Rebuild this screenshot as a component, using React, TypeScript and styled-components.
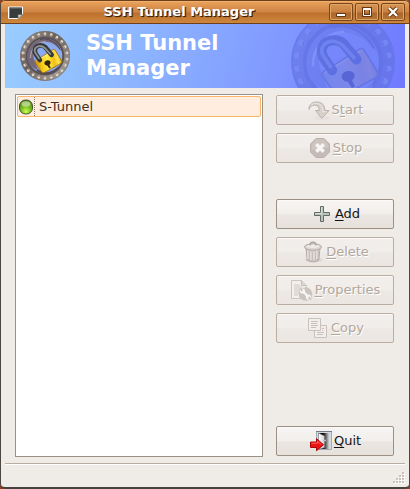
import React from 'react';
import styled, { createGlobalStyle, css } from 'styled-components';

const Global = createGlobalStyle`
  *, *::before, *::after { box-sizing: border-box; }
  html { background: #963e1c; }
  body { margin: 0; font-family: "DejaVu Sans", Verdana, sans-serif; font-size: 13px; color: #1c1a18; }
`;

const Window = styled.div`
  display: flex;
  flex-direction: column;
  min-height: 100vh;
  background: #efebe7;
  border: 1px solid #4a4641;
  border-top: 0;
  border-bottom: 2px solid #45423e;
  border-radius: 5px;
  overflow: hidden;
`;

const TitleBar = styled.header`
  display: flex;
  align-items: center;
  height: 24px;
  margin: 0 -1px;
  padding: 0 4px 0 7px;
  border: 1px solid #6f3f1a;
  border-radius: 5px 5px 0 0;
  background: linear-gradient(#eba45c 0, #dd9450 5px, #cf8544 11px, #bb702c 12px, #c67c35 17px, #cd863e 22px);
  box-shadow: inset 0 1px #f0b16f;
`;

const Title = styled.h1`
  flex: 1;
  margin: 0;
  padding-left: 6px;
  text-align: center;
  font-size: 13px;
  line-height: 22px;
  color: #fff;
  text-shadow: 1px 1px 1px #38200c, 1px 1px #593718;
`;

const WindowButtons = styled.div`
  display: flex;
  gap: 2px;
`;

const WindowButton = styled.button`
  display: grid;
  place-items: center;
  width: 24px;
  height: 18px;
  padding: 0;
  border: 1px solid #78451c;
  border-radius: 2px;
  background: linear-gradient(#d89552 0, #c98141 8px, #aa662d 9px, #b9752f 100%);
  box-shadow: inset 0 0 0 1px #dda566;
`;

const Banner = styled.section`
  position: relative;
  display: flex;
  align-items: center;
  gap: 16px;
  height: 64px;
  margin: 0 4px;
  padding-left: 15px;
  overflow: hidden;
  background: linear-gradient(105deg, #9acdff 0%, #8cb4ff 35%, #8098ff 68%, #7079ff 100%);
`;

const Watermark = styled.div`
  position: absolute;
  right: 10px;
  top: -14px;
  opacity: 0.8;
`;

const BannerTitle = styled.h2`
  position: relative;
  width: 180px;
  margin: 0;
  font-size: 21px;
  line-height: 25px;
  color: #fff;
`;

const Main = styled.main`
  flex: 1;
  display: grid;
  grid-template-columns: 1fr 118px;
  gap: 13px;
  padding: 6px 15px 6px 14px;
`;

const TunnelList = styled.ul`
  margin: 0;
  padding: 1px;
  list-style: none;
  background: #fff;
  border: 1px solid #9c8f83;
`;

const TunnelRow = styled.button`
  display: flex;
  align-items: center;
  width: 100%;
  height: 21px;
  padding: 0;
  border: 1px solid #fbb468;
  border-radius: 2px;
  background: #ffeee0;
  font: inherit;
  line-height: 16px;
  color: #3f3022;
`;

const StatusCell = styled.span`
  display: flex;
  height: 19px;
  width: 17px;
  align-items: center;
  border-right: 1px dotted #887a6d;
`;

const TunnelName = styled.span`
  padding-left: 4px;
`;

const Actions = styled.div`
  display: flex;
  flex-direction: column;
  gap: 8px;
  padding: 1px 0;
`;

const Group = styled.div<{ $push?: 'gap' | 'end' }>`
  display: flex;
  flex-direction: column;
  gap: 8px;
  ${p => p.$push === 'gap' && css`margin-top: 28px;`}
  ${p => p.$push === 'end' && css`margin-top: auto;`}
`;

const ActionButton = styled.button`
  display: flex;
  align-items: center;
  justify-content: center;
  gap: 1px;
  height: 30px;
  padding: 0;
  border: 1px solid #9c8f83;
  border-radius: 2px;
  background: linear-gradient(#f7f5f3 0, #f1eeeb 14px, #eae6e1 15px, #e7e1dc 100%);
  box-shadow: inset 0 1px #fbfaf9;
  font: inherit;
  line-height: 16px;
  color: #171513;

  &:disabled {
    border-color: #bcada1;
    background: linear-gradient(#f1eeeb 0, #f0edea 14px, #ece8e4 15px, #ebe6e2 100%);
    color: #b3a79b;
    text-shadow: 1px 1px #fff;
  }
`;

const Mnemonic = styled.span`
  text-decoration: underline;
  text-decoration-thickness: 1px;
  text-underline-offset: 2px;
  text-decoration-skip-ink: none;
`;

const StatusBar = styled.footer`
  display: flex;
  justify-content: flex-end;
  align-items: flex-end;
  height: 24px;
  margin: 0 4px;
  padding-bottom: 3px;
  border-top: 1px solid #b9ada1;
  box-shadow: inset 0 1px #fff;
`;

function Padlock({ size, faded }: { size: number; faded?: boolean }) {
  const id = faded ? 'faded' : 'full';
  const spots = Array.from({ length: 22 }, (_, i) => (i * 360) / 22);
  return (
    <svg width={size} height={size} viewBox="0 0 50 50" aria-hidden="true">
      <defs>
        <linearGradient id={`ring-${id}`} x1="0" y1="0" x2="1" y2="1">
          <stop offset="0" stopColor={faded ? '#6d80ee' : '#9a918c'} />
          <stop offset=".4" stopColor={faded ? '#6676e6' : '#6b5f5a'} />
          <stop offset="1" stopColor={faded ? '#6673e8' : '#aaa49b'} />
        </linearGradient>
        <linearGradient id={`body-${id}`} x1="0" y1=".4" x2="1" y2=".2">
          <stop offset="0" stopColor={faded ? '#7183e8' : '#c98f05'} />
          <stop offset=".2" stopColor={faded ? '#7988e8' : '#f8c917'} />
          <stop offset=".45" stopColor={faded ? '#7d88e4' : '#ffee45'} />
          <stop offset=".66" stopColor={faded ? '#7b83dd' : '#f4bd10'} />
          <stop offset=".82" stopColor={faded ? '#8287de' : '#ffe750'} />
          <stop offset="1" stopColor={faded ? '#6875dc' : '#b07600'} />
        </linearGradient>
      </defs>
      <circle cx="25" cy="25" r="22" fill="none" stroke={`url(#ring-${id})`} strokeWidth="5.8" />
      <circle cx="25" cy="25" r="24.5" fill="none" stroke={faded ? '#6674e8' : '#77716e'} strokeWidth=".7" />
      {spots.map(a => (
        <g key={a} transform={`rotate(${a} 25 25)`}>
          <ellipse cx="25" cy="3" rx="1.4" ry="1.7" fill={faded ? '#7489f2' : '#dcd6cb'} />
          <path d="M24.2 3.7q.8 1 1.7-.2" fill="none" stroke={faded ? '#5f6fe2' : '#746860'} strokeWidth=".6" />
        </g>
      ))}
      <circle cx="25" cy="25" r="18.3" fill={faded ? '#7586fa' : '#8caaf0'} stroke={faded ? '#5f70e3' : '#5c5050'} strokeWidth="2" />
      <path d="M9 33C4 22 11 8 25 8c7-1 14 4 16 12-6-7-11-10-19-9-9 2-11 9-7 20l3 8q-6-2-9-6z" fill={faded ? '#6c7eee' : '#74677a'} />
      <path d="M10.5 27c0-9 6-16 15-16.5" fill="none" stroke={faded ? '#7f93fa' : '#aaa0ac'} strokeWidth="1.2" />
      <path d="M20 8.5c8-2 16 2 20 10" fill="none" stroke={faded ? '#5f70e0' : '#4d4554'} strokeWidth="1" />
      <path d="M17 39c6 5 16 4 22-3" fill="none" stroke={faded ? '#6d7be9' : '#554b58'} strokeWidth="2" />
      <path d="M15.5 29.8 33 18.7q1.4-.7 2.1.5L41.7 30q.8 1.4-.6 2.3L24.3 41.6q-1.8.8-2.8-.8l-6.6-9.3q-.6-1.1.6-1.7z" fill={`url(#body-${id})`} stroke={faded ? '#6272df' : '#9c6900'} strokeWidth=".8" />
      <path d="M16.2 30.2 33.8 19.4" stroke={faded ? '#8894ea' : '#fff5a0'} strokeWidth=".8" />
      <path d="M19.8 29 15.6 22.8C12 15.5 21 12 25.5 16.5l6 7.3" fill="none" stroke={faded ? '#576adb' : '#35383a'} strokeWidth="4.8" strokeLinecap="round" />
      <path d="M19 27.3 15.2 21.5C13 16 20 12.8 24.8 17l5.5 6" fill="none" stroke={faded ? '#6c80ec' : '#8d9192'} strokeWidth="1.8" strokeLinecap="round" />
      <path d="M25.2 33.7c-1.6-1.4-.6-3.7 1.5-4.2 2.6-.7 4.5 1.2 3.7 3-.4.9-.9 1-1 1.4l1.4 2.9-1.5.7-2.1-3.1c-.8.1-1.4-.1-2-.7z" fill={faded ? '#505dcd' : '#382504'} />
    </svg>
  );
}

const AppIcon = () => (
  <svg width="15" height="13" viewBox="0 0 15 13" aria-hidden="true">
    <path d="M.5 1h14v7.5l-4 4H.5z" fill="#393e3d" stroke="#fff" />
    <path d="M1.5 11.5V2h12" fill="none" stroke="#777b78" />
    <path d="M10 12.5V8.5h4.5z" fill="#d5d4cf" stroke="#555" strokeWidth=".6" />
  </svg>
);

const StatusOrb = () => (
  <svg width="16" height="16" viewBox="0 0 16 16" aria-label="Connected">
    <defs>
      <radialGradient id="orb" cx=".5" cy=".82" r=".75">
        <stop offset="0" stopColor="#caff55" />
        <stop offset=".5" stopColor="#7bbf21" />
        <stop offset="1" stopColor="#50831b" />
      </radialGradient>
    </defs>
    <rect x="1.5" y="1" width="13" height="14" rx="6" fill="url(#orb)" stroke="#44552f" />
    <ellipse cx="8" cy="5" rx="4.5" ry="2.8" fill="#dcebbd" opacity=".65" />
  </svg>
);

const StartIcon = () => (
  <svg width="24" height="24" viewBox="0 0 24 24" aria-hidden="true">
    <ellipse cx="15" cy="20" rx="8" ry="2" fill="#e5e0dc" />
    <path d="M2 11.5C1.5 6.5 6 3.5 10.5 4c5 .5 7.5 4 7.3 8.5H22L14.7 20.3 8.5 12.5h3.7c.2-3.5-1.7-5.5-4.7-5.3C4.5 7.3 3 9 2 11.5z" fill="#d7d1cc" stroke="#bab1aa" strokeLinejoin="round" />
    <path d="M4 7.6c2-3 7.3-3.3 10 0 1.7 1.7 1.8 4 1.7 6h3.8" fill="none" stroke="#ebe7e4" />
  </svg>
);

const StopIcon = () => (
  <svg width="24" height="24" viewBox="0 0 24 24" aria-hidden="true">
    <path d="M8 2.5h8L21.5 8v8L16 21.5H8L2.5 16V8z" fill="#c5bbb6" stroke="#bcb1ab" />
    <path d="M8.4 3.6h7.2l4.8 4.8v3.2c-6 .3-12 1-16.8 3V8.4z" fill="#cec5c0" />
    <path d="m8.3 8.3 7.4 7.4m0-7.4-7.4 7.4" stroke="#f7f5f3" strokeWidth="3.6" />
  </svg>
);

const AddIcon = () => (
  <svg width="24" height="24" viewBox="0 0 24 24" aria-hidden="true">
    <path d="M10.5 4.5h3v6h6v3h-6v6h-3v-6h-6v-3h6z" fill="#b8c4bb" stroke="#626b66" />
    <path d="M11.5 5.5h1M5.5 11.5h6v-6" fill="none" stroke="#d9dfda" />
  </svg>
);

const DeleteIcon = () => (
  <svg width="24" height="24" viewBox="0 0 24 24" aria-hidden="true">
    <ellipse cx="13" cy="20" rx="9" ry="2.5" fill="#dfdad6" />
    <path d="M5 8h14l-1.2 12.2Q12 23.5 6.2 20.2z" fill="#d4cec9" stroke="#b3aaa3" />
    <path d="M8 11v9m3-8v9m3-9v9m3-10-.6 9" stroke="#b5aca5" />
    <path d="M7 11v8m3-7v8m3-8v8m3-9v8" stroke="#f0edea" />
    <ellipse cx="12" cy="7" rx="8.5" ry="3.2" fill="#ddd8d4" stroke="#b3aaa3" />
    <ellipse cx="12" cy="6.3" rx="6" ry="1.7" fill="#efebe8" />
    <path d="M9 5.5c0-4.5 6-4.5 6 0" fill="none" stroke="#aea59e" strokeWidth="1.5" />
  </svg>
);

const PropertiesIcon = () => (
  <svg width="24" height="24" viewBox="0 0 24 24" aria-hidden="true">
    <path d="M1.5 2.5h10l5 5v13h-15z" fill="#f2efed" stroke="#cdc5bf" />
    <path d="M4 7h6m-6 2h8m-8 2h8m-8 2h6m-6 2h5m-5 2h4" stroke="#cfc8c3" />
    <path d="M11.5 2.5v5h5" fill="#ddd7d2" stroke="#c5bdb7" />
    <circle cx="15.5" cy="16" r="6.8" fill="#cbc4be" />
    <path d="m12.5 13 6 6" stroke="#f7f5f3" strokeWidth="2.4" />
    <circle cx="12.5" cy="13" r="2.6" fill="#f7f5f3" />
    <circle cx="18.5" cy="19" r="2.6" fill="#f7f5f3" />
    <path d="m10 10.5 2.4 2.4m6.2 6.2 2.4 2.4" stroke="#cbc4be" strokeWidth="2" />
  </svg>
);

const CopyIcon = () => (
  <svg width="24" height="24" viewBox="0 0 24 24" aria-hidden="true">
    <g fill="#f1eeeb" stroke="#c9c1bb">
      <path d="M8.5 9.5h12v12h-12z" />
      <path d="M2.5 2.5h12v12h-12z" />
      <path d="M5 5.5h7m-7 2h6m-6 2h7m-7 2h5M16 12.5h2m-2 2h1m-6 2h7m-7 2h6" />
    </g>
  </svg>
);

const QuitIcon = () => (
  <svg width="24" height="24" viewBox="0 0 24 24" aria-hidden="true">
    <defs>
      <linearGradient id="dark-room"><stop offset=".4" stopColor="#000" /><stop offset="1" stopColor="#d0d0d0" /></linearGradient>
      <linearGradient id="door"><stop stopColor="#fff" /><stop offset="1" stopColor="#cfd1d4" /></linearGradient>
    </defs>
    <path d="M7.5 2.5h15v18h-15z" fill="#d5d9e0" stroke="#a6abb3" />
    <path d="M7 2.5h16" stroke="#737b87" />
    <path d="M10 4h10v16H10z" fill="url(#dark-room)" />
    <path d="m9.5 4 6 3v11.5l-6 2z" fill="url(#door)" stroke="#787b80" strokeWidth=".7" />
    <circle cx="16" cy="11.5" r="1" fill="#fff" stroke="#555" strokeWidth=".5" />
    <path d="M1.5 13h6V9.7l7 6-7 6V18.5h-6z" fill="#ee1111" stroke="#aa0303" strokeLinejoin="round" />
    <path d="M2.5 14.2h6v-2l3.5 3.2" fill="none" stroke="#ff6a63" />
  </svg>
);

const Grip = () => (
  <svg width="12" height="12" viewBox="0 0 12 12" aria-hidden="true">
    {[[9, 0], [6, 3], [9, 3], [3, 6], [6, 6], [9, 6], [0, 9], [3, 9], [6, 9], [9, 9]].map(([x, y]) => (
      <g key={`${x}-${y}`}>
        <rect x={x + 1} y={y + 1} width="2" height="2" fill="#fff" />
        <rect x={x} y={y} width="2" height="2" fill="#cbc3bb" />
      </g>
    ))}
  </svg>
);

const WindowGlyph = ({ kind }: { kind: 'min' | 'max' | 'close' }) => (
  <svg width="12" height="12" viewBox="0 0 12 12" aria-hidden="true">
    {kind === 'min' && <path d="M1.5 7.5h9v3h-9z" fill="#fff" stroke="#653714" />}
    {kind === 'max' && <><path d="M2.5 2.5h7v7h-7z" fill="none" stroke="#653714" strokeWidth="3" /><path d="M2.5 2.5h7v7h-7zM3 3.5h6" fill="none" stroke="#fff" /></>}
    {kind === 'close' && <><path d="m2 2 8 8m0-8-8 8" stroke="#653714" strokeWidth="4" /><path d="m2 2 8 8m0-8-8 8" stroke="#fff" strokeWidth="2.3" /></>}
  </svg>
);

function Action({ icon, label, hot = 0, disabled }: { icon: React.ReactNode; label: string; hot?: number; disabled?: boolean }) {
  return (
    <ActionButton type="button" disabled={disabled}>
      {icon}
      <span>{label.slice(0, hot)}<Mnemonic>{label[hot]}</Mnemonic>{label.slice(hot + 1)}</span>
    </ActionButton>
  );
}

export default function App() {
  return (
    <>
      <Global />
      <Window>
        <TitleBar>
          <AppIcon />
          <Title>SSH Tunnel Manager</Title>
          <WindowButtons>
            <WindowButton type="button" aria-label="Minimize"><WindowGlyph kind="min" /></WindowButton>
            <WindowButton type="button" aria-label="Maximize"><WindowGlyph kind="max" /></WindowButton>
            <WindowButton type="button" aria-label="Close"><WindowGlyph kind="close" /></WindowButton>
          </WindowButtons>
        </TitleBar>
        <Banner>
          <Watermark><Padlock size={104} faded /></Watermark>
          <Padlock size={50} />
          <BannerTitle>SSH Tunnel Manager</BannerTitle>
        </Banner>
        <Main>
          <TunnelList aria-label="Tunnels">
            <li>
              <TunnelRow type="button">
                <StatusCell><StatusOrb /></StatusCell>
                <TunnelName>S-Tunnel</TunnelName>
              </TunnelRow>
            </li>
          </TunnelList>
          <Actions>
            <Group>
              <Action icon={<StartIcon />} label="Start" hot={1} disabled />
              <Action icon={<StopIcon />} label="Stop" disabled />
            </Group>
            <Group $push="gap">
              <Action icon={<AddIcon />} label="Add" />
              <Action icon={<DeleteIcon />} label="Delete" disabled />
              <Action icon={<PropertiesIcon />} label="Properties" disabled />
              <Action icon={<CopyIcon />} label="Copy" disabled />
            </Group>
            <Group $push="end">
              <Action icon={<QuitIcon />} label="Quit" />
            </Group>
          </Actions>
        </Main>
        <StatusBar><Grip /></StatusBar>
      </Window>
    </>
  );
}
